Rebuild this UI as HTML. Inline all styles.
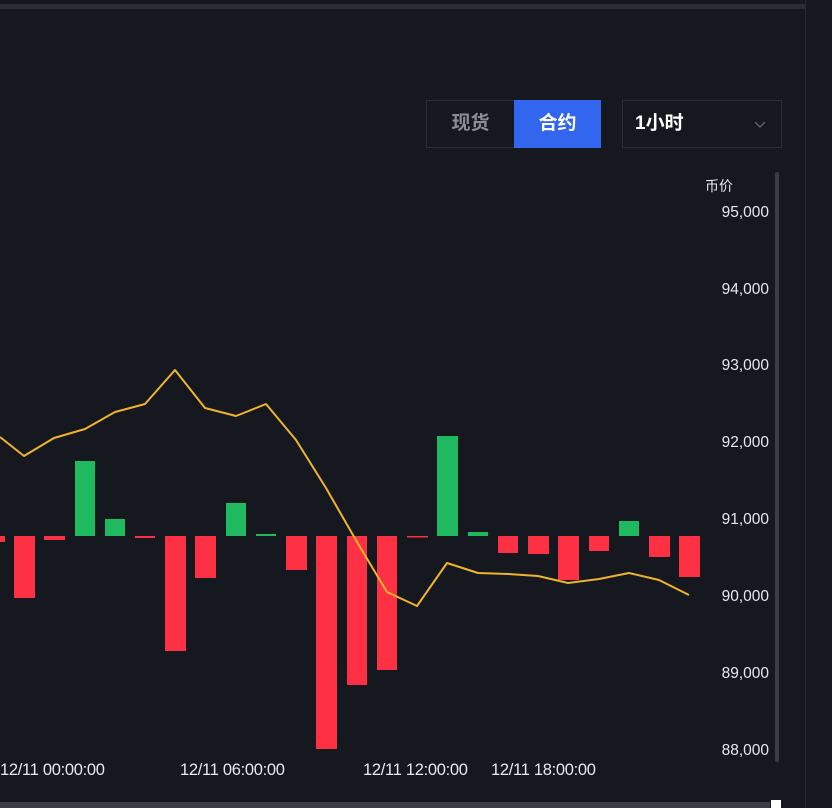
<!DOCTYPE html><html><head><meta charset="utf-8"><style>
body{margin:0;width:832px;height:808px;background:#15181f;overflow:hidden;position:relative;font-family:"Liberation Sans","Noto Sans CJK SC",sans-serif;color:#e6e8ec}
.a{position:absolute}
.y{position:absolute;right:63px;font-size:15.5px;line-height:18px}
.x{position:absolute;top:761px;font-size:16.5px;letter-spacing:-0.3px}
</style></head><body>
<div class="a" style="left:0;top:4px;width:805px;height:5px;background:#2a2d35"></div>
<div class="a" style="left:805px;top:0;width:1px;height:808px;background:#262930"></div>
<div class="a" style="left:0;top:802px;width:770px;height:6px;background:#3a3d44"></div>
<div class="a" style="left:771px;top:800px;width:10px;height:8px;background:#fff"></div>
<div class="a" style="left:775px;top:172px;width:4px;height:590px;background:#3a3d44;border-radius:2px"></div>
<div class="a" style="left:426px;top:100px;width:87px;height:46px;border:1px solid #2a2d35;font-size:19px;line-height:46px;text-align:center;color:#8a8d94;font-weight:bold">现货</div>
<div class="a" style="left:514px;top:100px;width:87px;height:48px;background:#3366ee;font-size:19px;line-height:48px;text-align:center;color:#fff;font-weight:bold">合约</div>
<div class="a" style="left:622px;top:100px;width:158px;height:46px;border:1px solid #2a2d35;font-size:19px;line-height:46px;color:#fff;font-weight:bold"><span style="margin-left:12px">1小时</span>
<svg class="a" style="left:130px;top:18px" width="14" height="10"><path d="M2 3l5 5 5-5" stroke="#5a5d64" stroke-width="1.5" fill="none"/></svg></div>
<div class="a" style="left:705px;top:176px;font-size:14px">币价</div>
<div class="y" style="top:204px">95,000</div>
<div class="y" style="top:281px">94,000</div>
<div class="y" style="top:357px">93,000</div>
<div class="y" style="top:434px">92,000</div>
<div class="y" style="top:511px">91,000</div>
<div class="y" style="top:588px">90,000</div>
<div class="y" style="top:665px">89,000</div>
<div class="y" style="top:742px">88,000</div>
<div class="x" style="left:0">12/11 00:00:00</div>
<div class="x" style="left:180px">12/11 06:00:00</div>
<div class="x" style="left:363px">12/11 12:00:00</div>
<div class="x" style="left:491px">12/11 18:00:00</div>
<svg class="a" style="left:0;top:0" width="832" height="808">
<g fill="#fe3044">
<rect x="0" y="536" width="5" height="6"/><rect x="14" y="536" width="21" height="62"/><rect x="44" y="536" width="21" height="4"/><rect x="135" y="536" width="20" height="2"/><rect x="165" y="536" width="21" height="115"/><rect x="195" y="536" width="21" height="42"/><rect x="286" y="536" width="21" height="34"/><rect x="316" y="536" width="21" height="213"/><rect x="347" y="536" width="20" height="149"/><rect x="377" y="536" width="20" height="134"/><rect x="407" y="536" width="21" height="1.5"/><rect x="498" y="536" width="20" height="17"/><rect x="528" y="536" width="21" height="18"/><rect x="558" y="536" width="21" height="44"/><rect x="589" y="536" width="20" height="15"/><rect x="649" y="536" width="21" height="21"/><rect x="679" y="536" width="21" height="41"/></g>
<g fill="#1fba5f">
<rect x="75" y="461" width="20" height="75"/><rect x="105" y="519" width="20" height="17"/><rect x="226" y="503" width="20" height="33"/><rect x="256" y="534" width="20" height="2"/><rect x="437" y="436" width="21" height="100"/><rect x="468" y="532" width="20" height="4"/><rect x="619" y="521" width="20" height="15"/></g>
<polyline fill="none" stroke="#f0b429" stroke-width="2" stroke-linejoin="round" points="0,437 24,456 54,438 85,429 115,412 145,404 175,370 205,408 236,416 266,404 296,440 326,488 357,542 387,592 417,606 447,563 478,573 508,574 538,576 568,583 599,579 629,573 659,580 689,595"/>
</svg>
</body></html>
